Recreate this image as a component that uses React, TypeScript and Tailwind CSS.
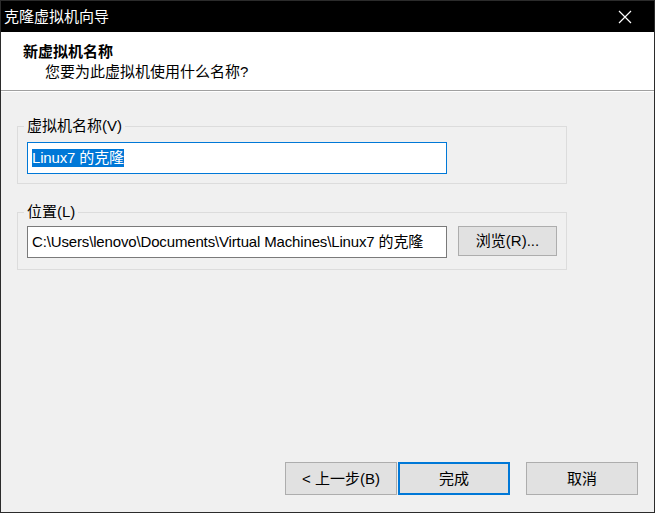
import React from "react";

const font = { fontFamily: '"Liberation Sans", "Noto Sans CJK SC", sans-serif' };

function GroupBox({ label, children, height }: { label: string; children: React.ReactNode; height: string }) {
  return (
    <div className={`relative w-[550px] ${height} border border-[#dcdcdc]`}>
      <span className="absolute left-[6px] top-[-11px] bg-[#f0f0f0] px-[3px] text-[15px] leading-[20px] text-black">
        {label}
      </span>
      {children}
    </div>
  );
}

export default function App() {
  return (
    <div
      className="w-[655px] h-[513px] border border-[#2b2b2b] bg-[#f0f0f0] flex flex-col overflow-hidden"
      style={font}
    >
      {/* Title bar */}
      <div className="h-[31px] bg-black flex items-center justify-between shrink-0">
        <span className="pl-[3px] text-white text-[15px] leading-[20px]">克隆虚拟机向导</span>
        <svg width="14" height="14" viewBox="0 0 14 14" className="mr-[22px]">
          <path d="M1 1 L13 13 M13 1 L1 13" stroke="white" strokeWidth="1.2" />
        </svg>
      </div>
      {/* Header */}
      <div className="h-[58px] bg-white shrink-0 flex flex-col pt-[10px]">
        <div className="pl-[22px] text-[15px] font-bold leading-[20px] text-black">新虚拟机名称</div>
        <div className="pl-[44px] text-[15px] leading-[20px] text-black">您要为此虚拟机使用什么名称?</div>
      </div>
      <div className="h-px bg-[#a0a0a0] shrink-0" />
      <div className="h-px bg-white shrink-0" />
      {/* Body */}
      <div className="flex-1 flex flex-col pl-[16px] pt-[34px]">
        <GroupBox label="虚拟机名称(V)" height="h-[58px]">
          <div className="ml-[9px] mt-[15px] w-[420px] h-[32px] border border-[#0078d7] bg-white flex items-center pl-[4px]">
            <span className="bg-[#0078d7] text-white text-[15px] leading-[18px] tracking-[-0.15px]">Linux7 的克隆</span>
          </div>
        </GroupBox>
        <div className="h-[28px]" />
        <GroupBox label="位置(L)" height="h-[58px]">
          <div className="flex items-start mt-[13px] ml-[9px]">
            <div className="w-[420px] h-[32px] border border-[#7a7a7a] bg-white flex items-center pl-[4px] text-[15px] leading-[20px] tracking-[-0.15px] text-black whitespace-nowrap overflow-hidden">
              C:\Users\lenovo\Documents\Virtual Machines\Linux7 的克隆
            </div>
            <button className="ml-[11px] w-[99px] h-[30px] border border-[#adadad] bg-[#e1e1e1] text-[15px] leading-[20px] text-black">
              浏览(R)...
            </button>
          </div>
        </GroupBox>
        <div className="flex-1" />
        {/* Footer buttons */}
        <div className="flex items-center pl-[268px] pb-[17px]">
          <button className="w-[112px] h-[33px] border border-[#adadad] bg-[#e1e1e1] text-[15px] leading-[20px] text-black">
            &lt; 上一步(B)
          </button>
          <button className="ml-[1px] w-[112px] h-[33px] border-2 border-[#0078d7] bg-[#e1e1e1] text-[15px] leading-[20px] text-black">
            完成
          </button>
          <button className="ml-[16px] w-[112px] h-[33px] border border-[#adadad] bg-[#e1e1e1] text-[15px] leading-[20px] text-black">
            取消
          </button>
        </div>
      </div>
    </div>
  );
}
